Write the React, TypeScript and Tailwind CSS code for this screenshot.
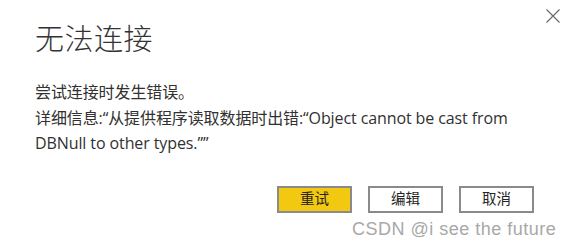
import * as React from "react";

const sans = "font-['Segoe_UI','Open_Sans','Noto_Sans_CJK_SC',sans-serif]";

function DialogButton({
  children,
  primary = false,
}: {
  children: React.ReactNode;
  primary?: boolean;
}) {
  return (
    <button
      type="button"
      className={
        primary
          ? "w-[75px] h-[27px] border-2 border-[#8a8a8a] bg-[#f2c811] text-[14.5px] text-[#252423] leading-none"
          : "w-[75px] h-[27px] border-2 border-[#8a8a8a] bg-white text-[14.5px] text-[#252423] leading-none"
      }
    >
      {children}
    </button>
  );
}

export default function App() {
  return (
    <div className={`relative w-[571px] h-[246px] bg-white overflow-hidden ${sans}`}>
      {/* Close */}
      <button
        type="button"
        aria-label="关闭"
        className="absolute left-[544px] top-[7px] w-[17px] h-[17px] flex items-center justify-center"
      >
        <svg width="16" height="16" viewBox="0 0 16 16" fill="none">
          <path d="M1.5 1.5 L14.5 14.5 M14.5 1.5 L1.5 14.5" stroke="#6b6b6b" strokeWidth="1.2" />
        </svg>
      </button>

      <div className="pt-[20px] pl-[35px] pr-[36px]">
        <h1 className="text-[29px] font-light text-[#333333] leading-[38px] tracking-[0.5px]">
          无法连接
        </h1>

        <div className="mt-[22px] text-[16px] leading-[25.5px] tracking-[-0.1px] text-[#323130]">
          <p>尝试连接时发生错误。</p>
          <p>
            详细信息:“从提供程序读取数据时出错:“Object cannot be cast from
            <br />
            DBNull to other types.””
          </p>
        </div>

        <div className="mt-[29px] flex justify-end gap-[16px] pr-[1px]">
          <DialogButton primary>重试</DialogButton>
          <DialogButton>编辑</DialogButton>
          <DialogButton>取消</DialogButton>
        </div>
      </div>

      {/* Watermark */}
      <div className="absolute left-[352px] top-[217px] text-[18px] leading-[24px] text-[#a8a8a8] font-['Liberation_Sans',Arial,sans-serif] tracking-[0.5px]">
        CSDN @i see the future
      </div>
    </div>
  );
}
